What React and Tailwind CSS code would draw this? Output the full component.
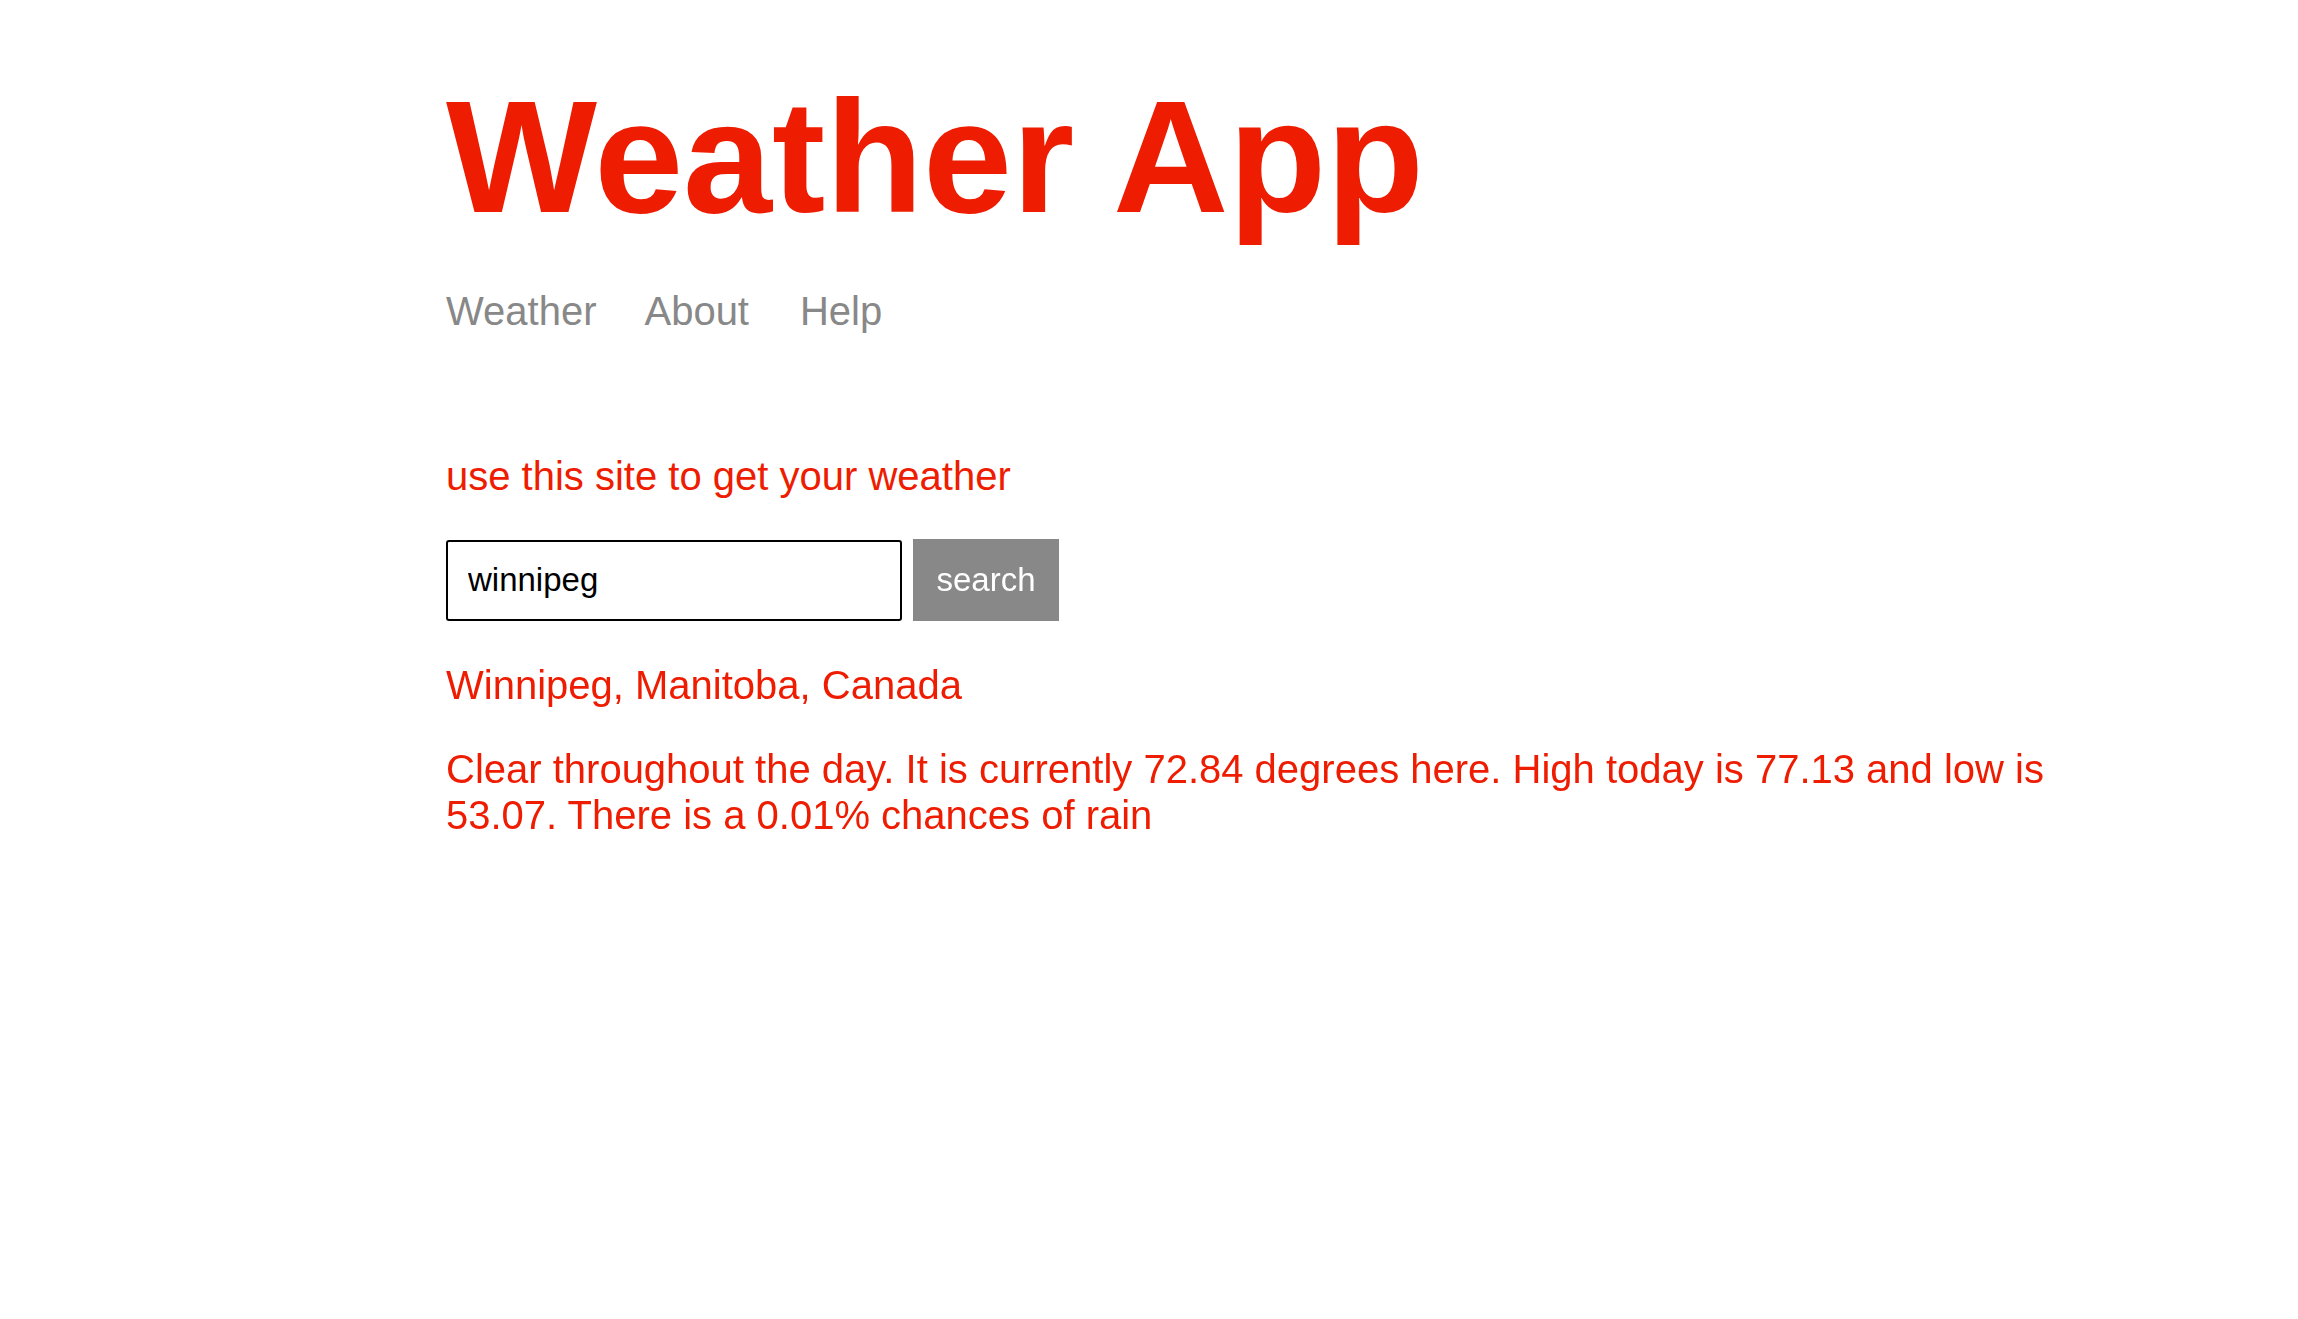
import React, { useState } from 'react';

export default function App() {
  const [city, setCity] = useState('winnipeg');

  return (
    <div className="min-h-screen bg-white font-['Liberation_Sans',Arial,sans-serif] text-[#ee1c00]">
      <div className="pl-[446px] pr-[200px] pt-[65px]">
        <h1 className="text-[160px] leading-[184px] font-bold">Weather App</h1>

        <nav className="mt-[39px] flex text-[40px] leading-[46px] text-[#888888]">
          <a href="#">Weather</a>
          <a href="#" className="ml-[48px]">About</a>
          <a href="#" className="ml-[51px]">Help</a>
        </nav>

        <p className="mt-[119px] text-[40px] leading-[46px]">use this site to get your weather</p>

        <form className="mt-[40px] flex items-center gap-[11px]" onSubmit={(e) => e.preventDefault()}>
          <input
            autoFocus
            value={city}
            onChange={(e) => setCity(e.target.value)}
            className="w-[456px] h-[81px] border-2 border-black rounded-[3px] pl-[20px] text-[33px] text-black outline-none"
          />
          <button className="h-[82px] w-[146px] bg-[#888888] text-white text-[33px]">search</button>
        </form>

        <p className="mt-[41px] text-[40px] leading-[46px]">Winnipeg, Manitoba, Canada</p>

        <p className="mt-[38px] text-[40px] leading-[46px]">
          Clear throughout the day. It is currently 72.84 degrees here. High today is 77.13 and low is 53.07. There is a 0.01% chances of rain
        </p>
      </div>
    </div>
  );
}
